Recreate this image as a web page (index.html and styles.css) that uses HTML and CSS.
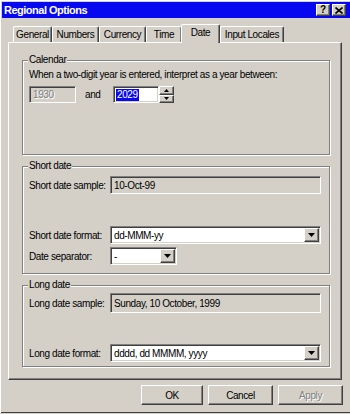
FILE: index.html
```html
<!DOCTYPE html>
<html>
<head>
<meta charset="utf-8">
<link rel="stylesheet" href="styles.css">
</head>
<body>
<div class="win">
  <div class="title">
    <span class="title-text">Regional Options</span>
    <div class="tbtns">
      <span class="tbtn">?</span>
      <span class="tbtn"><svg width="8" height="7" viewBox="0 0 8 7"><path d="M0.5 0.5 L7.5 6.5 M7.5 0.5 L0.5 6.5" stroke="#000" stroke-width="1.6" fill="none"/></svg></span>
    </div>
  </div>
  <div class="tabs">
    <div class="tab t-general">General</div>
    <div class="tab t-numbers">Numbers</div>
    <div class="tab t-currency">Currency</div>
    <div class="tab t-time">Time</div>
    <div class="tab t-date sel">Date</div>
    <div class="tab t-input">Input Locales</div>
  </div>
  <div class="panel">
    <div class="group g-cal">
      <span class="legend">Calendar</span>
      <div class="sentence">When a two-digit year is entered, interpret as a year between:</div>
      <div class="yrow">
        <div class="field ro y1"><span class="dis">1930</span></div>
        <span class="and">and</span>
        <div class="field y2"><span class="hl">2029</span></div>
        <div class="spin">
          <span class="sp"><svg width="5" height="3" viewBox="0 0 5 3"><path d="M2.5 0 L5 3 L0 3 Z" fill="#000"/></svg></span>
          <span class="sp"><svg width="5" height="3" viewBox="0 0 5 3"><path d="M0 0 L5 0 L2.5 3 Z" fill="#000"/></svg></span>
        </div>
      </div>
    </div>

    <div class="group g-short">
      <span class="legend">Short date</span>
      <div class="row r-ssample">
        <span class="lbl">Short date sample:</span>
        <div class="field ro wide h18">10-Oct-99</div>
      </div>
      <div class="row r-sformat">
        <span class="lbl">Short date format:</span>
        <div class="field combo wide h18">
          <span class="val">dd-MMM-yy</span>
          <span class="ddbtn"><svg width="7" height="4" viewBox="0 0 7 4"><path d="M0 0 L7 0 L3.5 4 Z" fill="#000"/></svg></span>
        </div>
      </div>
      <div class="row r-sep">
        <span class="lbl">Date separator:</span>
        <div class="field combo narrow h18">
          <span class="val">-</span>
          <span class="ddbtn"><svg width="7" height="4" viewBox="0 0 7 4"><path d="M0 0 L7 0 L3.5 4 Z" fill="#000"/></svg></span>
        </div>
      </div>
    </div>

    <div class="group g-long">
      <span class="legend">Long date</span>
      <div class="row r-lsample">
        <span class="lbl">Long date sample:</span>
        <div class="field ro wide h20">Sunday, 10 October, 1999</div>
      </div>
      <div class="row r-lformat">
        <span class="lbl">Long date format:</span>
        <div class="field combo wide h18">
          <span class="val">dddd, dd MMMM, yyyy</span>
          <span class="ddbtn"><svg width="7" height="4" viewBox="0 0 7 4"><path d="M0 0 L7 0 L3.5 4 Z" fill="#000"/></svg></span>
        </div>
      </div>
    </div>
  </div>
  <div class="buttons">
    <div class="btn btn-ok">OK</div>
    <div class="btn">Cancel</div>
    <div class="btn disabled">Apply</div>
  </div>
</div>
</body>
</html>
```
FILE: styles.css
```css
* { box-sizing: border-box; }
html, body { margin: 0; padding: 0; background: #d4d0c8; }
body {
  font-family: "Liberation Sans", Arial, sans-serif;
  font-size: 10px;
  letter-spacing: -0.4px;
  color: #000;
}
.win {
  width: 350px;
  height: 413px;
  padding: 2px 0 0 2px;
  background: #d4d0c8;
  box-shadow: inset 1px 1px 0 #fff, inset 0 -1px 0 #404040;
  display: flex;
  flex-direction: column;
}
.title {
  height: 16px;
  background: #0808f0;
  display: flex;
  align-items: center;
  justify-content: space-between;
  padding: 0 4px 0 2px;
}
.title-text {
  color: #fff;
  font-weight: bold;
  font-size: 11px;
  letter-spacing: -0.5px;
}
.tbtns { display: flex; gap: 2px; }
.tbtn {
  width: 14px;
  height: 12px;
  background: #d4d0c8;
  border: 1px solid;
  border-color: #fff #404040 #404040 #fff;
  box-shadow: inset -1px -1px 0 #808080;
  display: flex;
  align-items: center;
  justify-content: center;
  font-weight: bold;
  font-size: 10px;
  line-height: 10px;
  letter-spacing: 0;
}
.tabs {
  display: flex;
  align-items: flex-end;
  height: 18px;
  margin-top: 6px;
  padding-left: 11px;
  position: relative;
  z-index: 1;
}
.tab {
  height: 16px;
  border: 1px solid;
  border-color: #fff #404040 transparent #fff;
  border-bottom: none;
  border-radius: 2px 2px 0 0;
  box-shadow: inset -1px 0 0 #808080;
  display: flex;
  align-items: center;
  justify-content: center;
  background: #d4d0c8;
}
.t-general { width: 39px; }
.t-numbers { width: 47px; }
.t-currency { width: 47px; }
.t-time { width: 36px; }
.t-date { width: 39px; }
.t-input { width: 64px; }
.tab.sel {
  height: 19px;
  margin: 0 0 -1px -1px;
  padding-bottom: 3px;
  position: relative;
  z-index: 2;
}
.panel {
  margin-left: 6px;
  width: 334px;
  height: 338px;
  border: 1px solid;
  border-color: #fff #404040 #404040 #fff;
  box-shadow: inset -1px -1px 0 #808080;
  padding: 17px 0 0 13px;
}
.group {
  position: relative;
  width: 308px;
  border: 1px solid #808080;
  box-shadow: 1px 1px 0 #fff, inset 1px 1px 0 #fff;
  padding: 0 0 0 6px;
}
.legend {
  position: absolute;
  top: -7px;
  left: 5px;
  padding: 0 1px;
  background: #d4d0c8;
  line-height: 12px;
}
.g-cal { height: 95px; padding-top: 8px; }
.g-short { height: 108px; margin-top: 11px; padding-top: 9px; }
.g-long { height: 82px; margin-top: 11px; padding-top: 7px; }
.sentence { line-height: 12px; }
.yrow { display: flex; align-items: center; margin-top: 5px; }
.field {
  background: #fff;
  border: 1px solid;
  border-color: #808080 #fff #fff #808080;
  box-shadow: inset 1px 1px 0 #404040, inset -1px -1px 0 #d4d0c8;
  padding: 0 3px;
  display: flex;
  align-items: center;
  white-space: nowrap;
}
.field.ro { background: #d4d0c8; }
.y1 { width: 47px; height: 17px; }
.y2 { width: 46px; height: 17px; padding-left: 2px; }
.dis { color: #808080; text-shadow: 1px 1px 0 #fff; }
.hl { background: #0808f0; color: #fff; line-height: 12px; padding: 0 1px; }
.and { width: 28px; margin-left: 9px; }
.spin { display: flex; flex-direction: column; width: 15px; height: 17px; }
.sp {
  flex: 1;
  background: #d4d0c8;
  border: 1px solid;
  border-color: #fff #404040 #404040 #fff;
  box-shadow: inset -1px -1px 0 #808080;
  display: flex;
  align-items: center;
  justify-content: center;
}
.sp svg { display: block; }
.row { display: flex; align-items: center; }
.lbl { width: 81px; flex: 0 0 81px; white-space: nowrap; }
.wide { width: 211px; }
.narrow { width: 67px; }
.h18 { height: 18px; }
.h20 { height: 20px; }
.r-sformat { margin-top: 32px; }
.r-sep { margin-top: 3px; }
.r-lformat { margin-top: 31px; }
.combo { padding: 1px 1px 1px 3px; align-items: stretch; }
.combo .val { flex: 1; display: flex; align-items: center; }
.ddbtn {
  width: 15px;
  background: #d4d0c8;
  border: 1px solid;
  border-color: #fff #404040 #404040 #fff;
  box-shadow: inset -1px -1px 0 #808080;
  display: flex;
  align-items: center;
  justify-content: center;
}
.ddbtn svg { display: block; }
.buttons {
  display: flex;
  justify-content: flex-end;
  gap: 5px;
  margin-top: 5px;
  padding-right: 7px;
}
.btn {
  width: 65px;
  height: 20px;
  border: 1px solid;
  border-color: #fff #404040 #404040 #fff;
  box-shadow: inset -1px -1px 0 #808080;
  display: flex;
  align-items: center;
  justify-content: center;
}
.btn.btn-ok { width: 62px; }
.btn.disabled { color: #808080; text-shadow: 1px 1px 0 #fff; }
```
